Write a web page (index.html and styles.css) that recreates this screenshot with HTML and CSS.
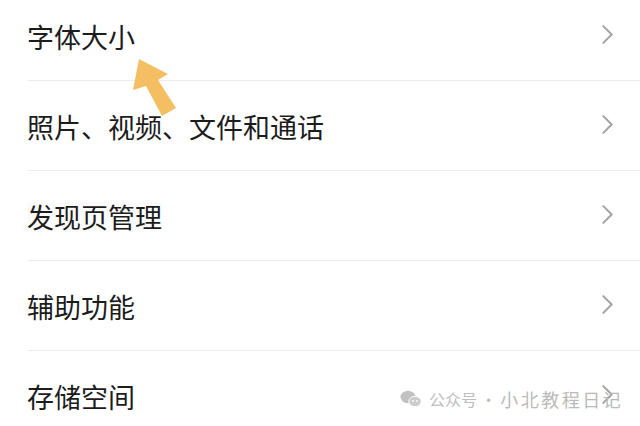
FILE: index.html
```html
<!DOCTYPE html>
<html lang="zh">
<head>
<meta charset="utf-8">
<link rel="stylesheet" href="styles.css">
</head>
<body>
<div class="screen">
  <ul class="list">
    <li class="row"><span class="label">字体大小</span><svg class="chev" viewBox="0 0 12 20"><path d="M2 2 L10 10 L2 18" /></svg></li>
    <li class="row"><span class="label">照片、视频、文件和通话</span><svg class="chev" viewBox="0 0 12 20"><path d="M2 2 L10 10 L2 18" /></svg></li>
    <li class="row"><span class="label hl">发现页管理</span><svg class="chev" viewBox="0 0 12 20"><path d="M2 2 L10 10 L2 18" /></svg></li>
    <li class="row"><span class="label">辅助功能</span><svg class="chev" viewBox="0 0 12 20"><path d="M2 2 L10 10 L2 18" /></svg></li>
    <li class="row"><span class="label">存储空间</span><svg class="chev" viewBox="0 0 12 20"><path d="M2 2 L10 10 L2 18" /></svg></li>
  </ul>
  <svg class="arrow" viewBox="0 0 640 426">
    <polygon points="139,59 168,74 158,80 176,108 162,116 146,86 133,90" />
  </svg>
  <div class="watermark">
    <svg class="wx" viewBox="0 0 22 18">
      <ellipse cx="8" cy="7" rx="7.5" ry="6.2" />
      <ellipse cx="15" cy="11.5" rx="6.2" ry="5.2" class="front" />
      <circle cx="13" cy="11" r="0.9" class="eye" />
      <circle cx="17" cy="11" r="0.9" class="eye" />
    </svg>
    <span class="wm-text">公众号 · </span><span class="wm-name">小北教程日记</span>
  </div>
</div>
</body>
</html>
```
FILE: styles.css
```css
* { box-sizing: border-box; }
html, body { margin: 0; padding: 0; background: #ffffff; }
.screen {
  position: relative;
  width: 640px;
  height: 426px;
  overflow: hidden;
  font-family: "Noto Sans CJK SC", "Noto Sans", sans-serif;
}
.list {
  list-style: none;
  margin: -9px 0 0 0;
  padding: 0 0 0 28px;
}
.row {
  height: 90px;
  display: flex;
  align-items: center;
  justify-content: space-between;
  padding-right: 26px;
  border-bottom: 1px solid #ebebeb;
}
.label {
  font-size: 27px;
  line-height: 1;
  color: #1c1c1c;
  margin-left: -1px;
  padding-top: 1px;
}
.hl { background: #fbfbfb; }
.chev {
  width: 13px;
  height: 21px;
  margin-top: -2px;
}
.chev path {
  fill: none;
  stroke: #a3a3a3;
  stroke-width: 1.9;
  stroke-linecap: round;
  stroke-linejoin: round;
}
.arrow {
  position: absolute;
  left: 0;
  top: 0;
  width: 640px;
  height: 426px;
}
.arrow polygon { fill: #f4bf63; }
.watermark {
  position: absolute;
  left: 400px;
  top: 386px;
  display: flex;
  align-items: center;
  color: #bdbdbd;
  font-size: 16px;
  white-space: pre;
}
.wx { width: 22px; height: 18px; margin-right: 7px; }
.wx ellipse { fill: #c2c2c2; }
.wx .front { fill: #cccccc; stroke: #fff; stroke-width: 1; }
.wx .eye { fill: #fff; }
.wm-name { font-size: 18px; letter-spacing: 2.5px; color: #bababa; }
```
